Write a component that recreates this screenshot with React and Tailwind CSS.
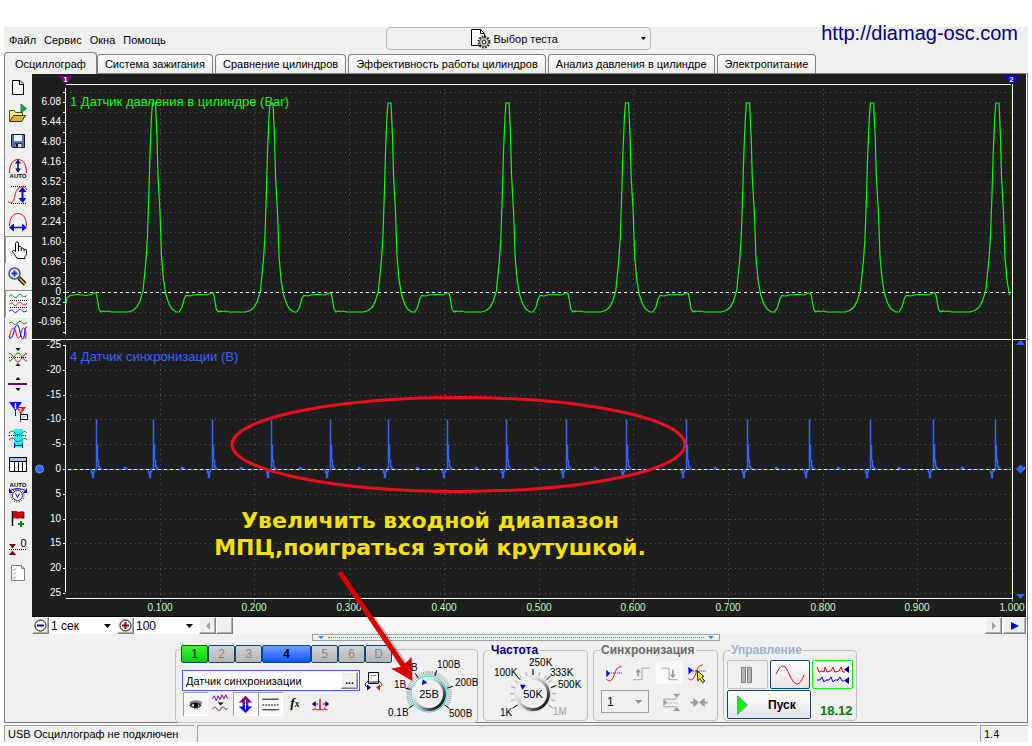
import clsx from 'clsx'

const TABS = [
  'Осциллограф',
  'Система зажигания',
  'Сравнение цилиндров',
  'Эффективность работы цилиндров',
  'Анализ давления в цилиндре',
  'Электропитание',
]

const PEAKS = [154, 271.5, 389.5, 507.5, 627, 748, 872, 997.5]
const SPIKES = [97, 154, 213, 272, 331, 389, 448, 507, 567, 627, 687, 748, 810, 871, 934, 996]

// offsets from the top of a pressure pulse: [dx, y]
const RISE = [
  [-60, 293], [-58, 293], [-57, 297], [-55, 309], [-53, 312], [-51, 311], [-49, 311.5], [-46, 311],
  [-42, 312], [-26, 312], [-21, 310.5], [-17, 307], [-14, 301], [-11, 291], [-8, 260], [-6.5, 236],
  [-5, 190], [-4, 153], [-2.5, 117], [-1.5, 103],
]
const FALL = [
  [1.5, 103], [3, 137], [4, 176], [6, 213], [7.5, 257], [9.5, 280], [12, 295], [15, 304], [18, 309],
  [22, 312], [25, 312], [28, 307], [30, 299], [32, 295.5], [36, 296], [39, 295], [45, 294.5],
  [53, 295],
]

const pressurePoints = () => {
  const points = [[66, 304], [67, 298], [70, 295.5], [78, 294.5], [86, 295.5], [92, 294.5]]
  PEAKS.forEach((peak, i) => {
    const before = i ? (peak - PEAKS[i - 1]) / 117 : 1
    const after = i < PEAKS.length - 1 ? (PEAKS[i + 1] - peak) / 117 : 1
    RISE.forEach(([dx, y]) => points.push([peak + dx * before, y]))
    FALL.forEach(([dx, y]) => points.push([peak + dx * after, y]))
  })
  return points.filter(([x]) => x < 1012).map((p) => p.join(',')).join(' ')
}

const syncPath = SPIKES.map(
  (x) =>
    `M${x - 5} 469v3h1v5h1v-6h1v-2h2V419v26h1v15h1v6h1v2h2M${x + 28} 469v-2h1v1h2`
).join('')

const TOP_LABELS = [
  ['6.08', 102], ['5.44', 122], ['4.80', 142], ['4.16', 162], ['3.52', 182], ['2.88', 202],
  ['2.24', 222], ['1.60', 242], ['0.96', 262], ['0.32', 282], ['0', 292], ['-0.32', 302],
  ['-0.96', 322],
]
const BOTTOM_LABELS = [-25, -20, -15, -10, -5, 0, 5, 10, 15, 20, 25]
const bottomY = (value) => Math.round(469 + value * 4.96)
const timeX = (step) => Math.round(65 + step * 94.7)
const TOP_ROWS = Array.from({ length: 25 }, (_, i) => 92 + i * 10)
const TIME_STEPS = Array.from({ length: 10 }, (_, i) => i + 1)

const Chart = () => (
  <svg
    viewBox="32 74 994 543"
    className="pointer-events-none relative z-10 block h-auto w-full overflow-visible font-['Liberation_Sans',sans-serif]">
    <rect x="32" y="74" width="994" height="543" fill="#1e1e1e" />
    <g stroke="#555" strokeWidth="1" strokeDasharray="1 4" shapeRendering="crispEdges">
      {TOP_ROWS.map((y) => (
        <path key={y} d={`M70 ${y + 0.5}H1011`} />
      ))}
      {BOTTOM_LABELS.map((v) => (
        <path key={v} d={`M70 ${bottomY(v) + 0.5}H1011`} />
      ))}
      {TIME_STEPS.slice(0, 9).map((s) => (
        <path key={s} d={`M${timeX(s) + 0.5} 89V338M${timeX(s) + 0.5} 344V597`} />
      ))}
    </g>
    <g stroke="#fff" fill="none" shapeRendering="crispEdges">
      <path d="M65.5 84V598M65 84.5H1012M1012.5 84V599M32 339.5H1026M65 598.5H1013" />
      {TOP_ROWS.map((y) => (
        <path key={y} d={`M63 ${y + 0.5}h3`} />
      ))}
      {BOTTOM_LABELS.map((v) => (
        <path key={v} d={`M63 ${bottomY(v) + 0.5}h3`} />
      ))}
    </g>
    <path d="M65.5 78V88M65.5 334V345M65.5 592V600" stroke="#800080" />
    <path d="M1011.5 84V598" stroke="#00f" shapeRendering="crispEdges" />
    <path d="M58 76H73L65.500 84Z" fill="#800080" />
    <path d="M1004 76H1019L1011.500 84Z" fill="#00f" />
    <g fill="#fff" fontSize="8" fontWeight="bold" textAnchor="middle">
      <text x="65.500" y="82">1</text>
      <text x="1011.500" y="82">2</text>
    </g>
    <g fill="#fff" fontSize="10" textAnchor="end">
      {TOP_LABELS.map(([label, y]) => (
        <text key={label} x="61" y={y + 3}>{label}</text>
      ))}
      {BOTTOM_LABELS.map((v) => (
        <text key={v} x="61" y={bottomY(v) + 3}>{v}</text>
      ))}
    </g>
    <g fill="#c8ffc8" fontSize="10" textAnchor="middle">
      {TIME_STEPS.map((s) => (
        <text key={s} x={timeX(s)} y="611">{(s / 10).toFixed(3)}</text>
      ))}
    </g>
    <g stroke="#888" shapeRendering="crispEdges">
      {TIME_STEPS.map((s) => (
        <path key={s} d={`M${timeX(s) + 0.5} 599v3`} />
      ))}
    </g>
    <path d="M66 469.5H1011" stroke="#36f" shapeRendering="crispEdges" />
    <path d={syncPath} stroke="#36f" strokeWidth="1.500" fill="none" transform="translate(-.5 .5)" />
    <path
      d="M66 292.5H1011M68 469.5H1011"
      stroke="#fff"
      strokeDasharray="3 3"
      shapeRendering="crispEdges"
    />
    <polyline points={pressurePoints()} fill="none" stroke="#0f0" strokeWidth="1.200" />
    <text x="70" y="106" fontSize="13" fill="#0f0">1 Датчик давления в цилиндре (Bar)</text>
    <text x="70" y="361" fontSize="13" fill="#36f">4 Датчик синхронизации (B)</text>
    <g fill="#36f">
      <circle cx="39.500" cy="469" r="4" stroke="#9bb6ff" strokeWidth=".6" />
      <path d="M1020.500 340l4.500 5h-9zM1016 594h9l-4.500 5zM1020.500 464.500l4.500 4.500-4.500 4.500-4.500-4.500z" />
    </g>
    <path d="M32 616.500H1026" stroke="#000" />

    <ellipse cx="458.500" cy="444.500" rx="226.500" ry="47" fill="none" stroke="#f20d1a" strokeWidth="3" />
    <g
      fill="#f5e100"
      fontSize="22"
      fontWeight="bold"
      textAnchor="middle"
      className="font-['DejaVu_Sans',sans-serif]">
      <text x="430" y="528">Увеличить входной диапазон</text>
      <text x="430" y="555">МПЦ,поиграться этой крутушкой.</text>
    </g>
    <g fill="none" stroke="#000" strokeOpacity=".25" strokeWidth="5" strokeLinecap="round">
      <path d="M344 576L410 672" />
    </g>
    <path d="M341 574L404 667" stroke="#d80000" strokeWidth="5" strokeLinecap="round" />
    <path d="M412.500 681L391 668.500 400.500 667 409 660 411.500 656.500Z" fill="#d80000" />
  </svg>
)

const ToolIcon = ({ children, className }) => (
  <svg viewBox="0 0 27 27" className={clsx('size-[27px]', className)} fill="none">
    {children}
  </svg>
)

const TOOLS = [
  {
    label: 'Новый',
    icon: <path d="M7.500 6.500H15l3.500 3.500v10.500h-11zM14.500 6.500v4h4" fill="#fff" stroke="#000" />,
  },
  {
    label: 'Открыть',
    icon: (
      <>
        <path d="M4.500 20.500v-11h5l1 2h7v3" fill="#ffe98a" stroke="#5b4a00" />
        <path d="M4.500 20.500l4-6h12l-4 6z" fill="#d9b13b" stroke="#3d3200" />
        <path d="M16 3l5.500 4.500L16 12z" fill="#00b050" stroke="#063" strokeWidth=".7" />
      </>
    ),
  },
  {
    label: 'Сохранить',
    icon: (
      <>
        <path d="M6.500 6.500h13v13h-12l-1-1z" fill="#5a74b8" stroke="#101840" />
        <path d="M9 7h8v6H9z" fill="#e8f0ff" />
        <path d="M10 15.500h7v4h-7z" fill="#ddd" stroke="#101840" strokeWidth=".8" />
        <path d="M11 16h2v3h-2z" fill="#101840" />
      </>
    ),
  },
  {
    label: 'Авто',
    icon: (
      <>
        <path d="M4.500 18C4.500 9 8 4.500 13 4.500S21.500 9 21.500 18" stroke="#f00" />
        <path d="M13 5.500v11" stroke="#00008b" strokeWidth="1.500" />
        <path d="M13 4.500l3 4h-6zM13 17.500l3-4h-6z" fill="#00008b" />
        <text x="13" y="22.500" fontSize="6" fontWeight="bold" textAnchor="middle" fill="#000">AUTO</text>
      </>
    ),
  },
  {
    label: 'По вертикали',
    icon: (
      <>
        <path d="M6 4.500h16M6 21.500h16" stroke="#000" strokeDasharray="1 1" />
        <path d="M3 19.500c2 2 5 1.500 6-2C10.500 12 11 6 16 5c3-.6 4 0 6 3" stroke="#f00" />
        <path d="M17.500 7v12" stroke="#00f" strokeWidth="2" />
        <path d="M17.500 5l4 5h-8zM17.500 21l4-5h-8z" fill="#00f" />
      </>
    ),
  },
  {
    label: 'По горизонтали',
    icon: (
      <>
        <path d="M4.500 17C4.500 9 8 4.500 13 4.500S21.500 9 21.500 17" stroke="#f00" />
        <path d="M7 18.500h12" stroke="#00f" strokeWidth="1.500" />
        <path d="M4 18.500l5-4v8zM22 18.500l-5-4v8z" fill="#00f" />
      </>
    ),
  },
  {
    label: 'Рука',
    active: true,
    icon: (
      <path
        d="M10.500 15V7.500c0-2 3-2 3 0V13v-1.500c.5-1.500 2.500-1.200 2.800 0V13c.3-1.200 2.500-1.200 2.700 0v1c.5-1.200 2.500-1 2.500.5v4l-1.500 2v2h-8c-1-2-2.500-4.500-4-6-1.500-1.700.5-3 2.500-1zM13.500 12v3M16.300 13v2M19 13.500v2"
        fill="#fff"
        stroke="#000"
      />
    ),
  },
  {
    label: 'Масштаб',
    icon: (
      <>
        <path d="M14 15l6 6" stroke="#000" strokeWidth="4" />
        <path d="M14.500 15.500l5.500 5.500" stroke="#e0a030" strokeWidth="2" />
        <circle cx="9.500" cy="10.500" r="5.500" fill="#dce9ff" stroke="#44577f" strokeWidth="1.500" />
        <path d="M6.500 10.500h6M9.500 7.500v6" stroke="#123ea0" strokeWidth="2" />
      </>
    ),
  },
  {
    label: 'Раздельно',
    active: true,
    icon: (
      <>
        <path d="M4 6.500c2-2 3-2 4.500 0s3 1 4.500-1 3-1 4.500.500 3 .5 4.500-.5" stroke="#080" />
        <path d="M5 10.500h18M5 17.500h18" stroke="#000" strokeDasharray="1 1" />
        <path d="M4 14.500c2-2 3-2 4.500 0s3 1 4.500-1 3-1 4.500.500 3 .5 4.500-.5" stroke="#f00" />
        <path d="M4 21.500c2-2 3-2 4.500 0s3 1 4.500-1 3-1 4.500.500 3 .5 4.500-.5" stroke="#00f" />
      </>
    ),
  },
  {
    label: 'Вместе',
    icon: (
      <>
        <path d="M4 6.500c2-2 3-2 4.500 0s3 1 4.500-1 3-1 4.500.500 3 .5 4.500-.5" stroke="#080" />
        <path d="M5 22c-1-3 1-11 3.500-11s2.500 10 5 10 2.500-10 5-10 3 7 2 11" stroke="#f00" />
        <path d="M4 19c1 3 3 3 4.500-3S11 8 12.500 8s2 6 3.500 11 3 3 3.500-2 .5-7 2.500-7" stroke="#00f" />
      </>
    ),
  },
  {
    label: 'Симметрия',
    icon: (
      <>
        <path d="M10.500 4h5L13 7zM10.500 22h5L13 19z" fill="#000" />
        <path d="M4 13.500h18" stroke="#000" strokeDasharray="1 1" />
        <path d="M4 9.500c4 0 6 8.500 9 8.500s5-8.500 9-8.500" stroke="#f00" />
        <path d="M4 17c4 0 6-8 9-8s5 8 9 8" stroke="#080" />
      </>
    ),
  },
  {
    label: 'Линия',
    icon: (
      <>
        <path d="M10.500 9h5L13 6zM10.500 17h5L13 20z" fill="#000" />
        <path d="M3 13h19" stroke="#800080" strokeWidth="2" />
      </>
    ),
  },
  {
    label: 'Маркеры',
    icon: (
      <>
        <path d="M11 9h10l-5 7z" fill="#f00" />
        <path d="M13.500 10.500h3l-2 2.500h3" stroke="#fff" strokeWidth=".8" />
        <path d="M15.500 14v10" stroke="#f00" />
        <path d="M4 4h13l-6.500 9z" fill="#00f" />
        <path d="M10.500 12v6" stroke="#00f" />
        <path d="M10.500 5v6" stroke="#fff" strokeWidth="1.500" />
        <path d="M15.500 16.500h7v5h-7z" fill="#fff" stroke="#00006b" />
        <path d="M17 19.500l1-1 1 1 2-2" stroke="#666" strokeWidth=".7" />
      </>
    ),
  },
  {
    label: 'Область',
    icon: (
      <>
        <path d="M9 4h9v18H9z" fill="#0ff" />
        <path d="M4 8c3-3 4-2 6 0s5 2 7 0 3-2 5 0" stroke="#080" />
        <path d="M4 10.500h18" stroke="#000" strokeDasharray="1 1" />
        <path d="M4 15c3-3 4-2 6 0s5 2 7 0 3-2 5 0" stroke="#f00" />
        <path d="M9.500 18v5M17.500 18v5M10 20.500h7" stroke="#00008b" />
      </>
    ),
  },
  {
    label: 'Таблица',
    icon: (
      <>
        <path d="M4.500 5.500h17v14h-17z" fill="#fff" stroke="#000" />
        <path d="M5 6h16v3H5z" fill="#9cc8f0" />
        <path d="M5 9.500h16M9.500 9v10M13.500 9v10M17.500 9v10" stroke="#000" />
      </>
    ),
  },
  {
    label: 'Авто напряжение',
    icon: (
      <>
        <text x="13" y="8" fontSize="6" fontWeight="bold" textAnchor="middle" fill="#000">AUTO</text>
        <path d="M5 12c3-3 13-3 16 0" stroke="#00f" />
        <path d="M4 9v5h4zM22 9v5h-4z" fill="#00f" />
        <circle cx="12.500" cy="16.500" r="6.500" stroke="#000" strokeDasharray="1 1.500" />
        <circle cx="12.500" cy="16.500" r="5" fill="#fff" stroke="#333" />
        <path d="M10.500 14.500l2 4 2-4" stroke="#00f" />
      </>
    ),
  },
  {
    label: 'Добавить метку',
    icon: (
      <>
        <path d="M7.500 5v15" stroke="#000" strokeWidth="1.500" />
        <path d="M8 6c3-2 5 1 7 0 2-.8 3 0 4 0v6c-2 1-3-1-5 0s-4-1-6 0z" fill="#e00000" stroke="#400" strokeWidth=".7" />
        <path d="M13 18h6M16 15v6" stroke="#080" strokeWidth="2" />
      </>
    ),
  },
  {
    label: 'Ноль',
    icon: (
      <>
        <path d="M4 16.500h18" stroke="#000" strokeDasharray="1 1" />
        <path d="M4 11h7l-3.500 4.500zM4 22h7l-3.500-4.500z" fill="#800000" />
        <text x="18.500" y="14" fontSize="11" textAnchor="middle" fill="#000">0</text>
      </>
    ),
  },
  {
    label: 'Отчёт',
    icon: (
      <>
        <path d="M6.500 5.500h10l3 3v12h-13zM16.500 5.500v3h3" fill="#fff" stroke="#808080" />
        <path d="M8 9.500l1 1 2-2M8 13.500l1 1 2-2M8 17.500l1 1 2-2" stroke="#808080" />
      </>
    ),
  },
]

const SideBar = () => (
  <nav className="flex w-[27px] shrink-0 flex-col">
    {TOOLS.map(({ label, icon, active }) => (
      <button
        key={label}
        aria-label={label}
        className={clsx(
          'h-[27px]',
          active && 'bg-[#f8f8f8] shadow-[inset_1px_1px_0_#909090,inset_-1px_-1px_0_#fff]'
        )}>
        <ToolIcon>{icon}</ToolIcon>
      </button>
    ))}
  </nav>
)

const Header = () => (
  <header className="relative grid h-[25px] grid-cols-[1fr_265px_1fr] items-center pl-[5px]">
    <nav className="flex gap-2">
      {['Файл', 'Сервис', 'Окна', 'Помощь'].map((item) => (
        <button key={item}>{item}</button>
      ))}
    </nav>
    <button className="flex h-[23px] items-center justify-center gap-[2px] self-start rounded-sm border border-[#b8b8b8] px-1">
      <span className="flex-[9]" />
      <svg viewBox="0 0 21 21" className="size-[21px]" fill="none">
        <path d="M1.500 1.500h9l4 4v12h-13zM10.500 1.500v4h4" fill="#fff" stroke="#000" />
        <circle cx="14" cy="14" r="5.500" stroke="#222" strokeWidth="2" strokeDasharray="1.600 1.280" />
        <circle cx="14" cy="14" r="4.500" fill="#b9c9b4" stroke="#222" strokeWidth=".7" />
        <circle cx="14" cy="14" r="1.800" fill="#fff" stroke="#222" />
      </svg>
      Выбор теста
      <span className="flex flex-[10] justify-end">
        <svg viewBox="0 0 5 3" className="h-[3px] w-[5px]">
          <path d="M0 0h5L2.500 3z" />
        </svg>
      </span>
    </button>
    <a
      href="http://diamag-osc.com"
      className="absolute -top-[6px] right-[10px] text-xl/6 text-[#000080]">
      http://diamag-osc.com
    </a>
  </header>
)

const TabBar = () => (
  <div role="tablist" className="flex items-end gap-[2px] border-b border-[#808080]">
    {TABS.map((tab, i) => (
      <button
        key={tab}
        role="tab"
        aria-selected={i === 0}
        className={clsx(
          'whitespace-nowrap rounded-t-sm border border-b-0 border-[#808080]',
          i === 0
            ? '-mr-[2px] -mb-px h-[22px] bg-[#f0f0f0] px-[10px]'
            : 'h-[19px] bg-linear-to-b from-white to-[#ececec] px-[7px]'
        )}>
        {tab}
      </button>
    ))}
  </div>
)

const RAISED = 'border border-[#808080] border-t-white border-l-white bg-[#f0f0f0] shadow-[inset_-1px_-1px_0_#b0b0b0]'

const Combo = ({ label, value, className }) => (
  <span className={clsx('relative flex items-center', className)}>
    <select aria-label={label} className="h-full w-full appearance-none bg-transparent pl-[2px]">
      <option>{value}</option>
    </select>
    <svg viewBox="0 0 7 4" className="pointer-events-none absolute right-[6px] h-1 w-[7px] fill-current">
      <path d="M0 0h7L3.500 4z" />
    </svg>
  </span>
)

const RoundButton = ({ label, color, plus }) => (
  <button aria-label={label} className={clsx('flex w-[17px] items-center justify-center', RAISED)}>
    <svg viewBox="0 0 13 13" className="size-[13px]" fill="none">
      <circle cx="6.500" cy="6.500" r="5.500" fill="#fff" stroke="#000" />
      <path d={plus ? 'M3 6.500h7M6.500 3v7' : 'M3 6.500h7'} stroke={color} strokeWidth="2" />
    </svg>
  </button>
)

const ScrollRow = () => (
  <div className="flex h-[17px] bg-[repeating-conic-gradient(#fff_0_25%,#efefef_0_50%)] bg-size-[2px_2px]">
    <RoundButton label="Уменьшить" color="#000080" />
    <Combo label="Развёртка" value="1 сек" className="w-[68px] bg-white text-xs" />
    <RoundButton label="Увеличить" color="#800000" plus />
    <Combo label="Масштаб" value="100" className="w-[65px] bg-white text-xs" />
    <button aria-label="Назад" className={clsx('flex w-[17px] items-center justify-center', RAISED)}>
      <svg viewBox="0 0 4 8" className="h-2 w-1 fill-[#a0a0a0]">
        <path d="M4 0v8L0 4z" />
      </svg>
    </button>
    <div className={clsx('w-[17px]', RAISED)} />
    <div className="flex-1" />
    <button aria-label="Вперёд" className={clsx('flex w-[17px] items-center justify-center', RAISED)}>
      <svg viewBox="0 0 4 8" className="h-2 w-1 fill-[#a0a0a0]">
        <path d="M0 0v8l4-4z" />
      </svg>
    </button>
    <button
      aria-label="Воспроизвести"
      className={clsx('ml-px flex w-[23px] items-center justify-center', RAISED)}>
      <svg viewBox="0 0 8 8" className="size-2 fill-[#00f]">
        <path d="M0 0v8l8-4z" />
      </svg>
    </button>
  </div>
)

const Splitter = () => (
  <div className="mx-auto flex h-[7px] w-[408px] items-center gap-1 border border-[#a0a0a0] px-[5px]">
    <svg viewBox="0 0 6 3" className="h-[3px] w-[6px] fill-[#1e90ff]">
      <path d="M0 0h6L3 3z" />
    </svg>
    <div className="flex-1 border-t border-dotted border-[#1e90ff]" />
    <svg viewBox="0 0 6 3" className="h-[3px] w-[6px] fill-[#1e90ff]">
      <path d="M0 0h6L3 3z" />
    </svg>
  </div>
)

const polar = (cx, cy, r, deg) => {
  const a = (deg * Math.PI) / 180
  return `${(cx + r * Math.cos(a)).toFixed(2)} ${(cy + r * Math.sin(a)).toFixed(2)}`
}

/**
 * Rotary knob with its scale
 * @param {Number} minor - count of the small grey ticks
 * @param {Array} marks - [text, x, y, tick angle, greyed]
 * @param {Number} pointer - angle of the blue pointer
 */
const Knob = ({ id, value, minor, marks, pointer, ring, cx, cy, className }) => (
  <svg viewBox="0 0 95 72" className={clsx('h-[72px] w-[95px] shrink-0', className)} fill="none">
    <defs>
      <linearGradient id={id} x1="0.100" y1="0.200" x2="0.850" y2="0.850">
        <stop offset="0" stopColor="#fff" />
        <stop offset=".5" stopColor="#bbb" />
        <stop offset="1" stopColor="#111" />
      </linearGradient>
    </defs>
    {Array.from({ length: minor }, (_, i) => {
      const deg = 145 + (i * 250) / (minor - 1)
      return <path key={i} d={`M${polar(cx, cy, 19, deg)}L${polar(cx, cy, 23, deg)}`} stroke="#a0a0a0" />
    })}
    {marks.map(([text, x, y, deg, grey]) => (
      <g key={text}>
        <path d={`M${polar(cx, cy, 19, deg)}L${polar(cx, cy, 25, deg)}`} stroke={grey ? '#a0a0a0' : '#000'} />
        <text x={x} y={y} fontSize="10" fill={grey ? '#a0a0a0' : '#000'}>{text}</text>
      </g>
    ))}
    <circle cx={cx} cy={cy} r="17" fill={`url(#${id})`} />
    <circle cx={cx} cy={cy} r="14" fill="#f0f0f0" />
    <circle cx={cx} cy={cy} r="18" stroke={ring} />
    <path
      d="M-2 -3L3 0L-2 3Z"
      fill="#00f"
      transform={`translate(${polar(cx, cy, 13, pointer)}) rotate(${pointer})`}
    />
    <text x={cx} y={cy + 4} fontSize="11" fill="#000" textAnchor="middle">{value}</text>
  </svg>
)

const RANGE_MARKS = [
  ['0.1В', 4, 66, 145],
  ['1В', 10, 38, 194],
  ['10В', 16, 21, 236],
  ['100В', 53, 18, 288],
  ['200В', 71, 36, 342],
  ['500В', 65, 67, 35],
]
const RATE_MARKS = [
  ['1K', 16, 66, 145],
  ['100K', 10, 26, 228],
  ['250K', 45, 16, 270],
  ['333K', 66, 26, 314],
  ['500K', 74, 38, 340],
  ['1M', 69, 65, 35, true],
]

const CHANNELS = ['1', '2', '3', '4', '5', '6', 'D']
const channelStyle = {
  1: 'w-[27px] bg-linear-to-b from-[#38f838] to-[#00d000]',
  4: 'w-[49px] bg-linear-to-b from-[#6a9cff] to-[#1050ff] font-bold',
}

const CHANNEL_TOOLS = [
  {
    label: 'Видимость',
    active: true,
    icon: (
      <>
        <path d="M6 11c3-3 9-3 13-1v3H7z" fill="#8a8a80" />
        <path d="M7 14c2-3 8-3 11 0-2 3-8 3-11 0z" fill="#fff" stroke="#222" strokeWidth="1.500" />
        <circle cx="13" cy="14" r="2.200" fill="#000" />
        <path d="M11 17.500h4" stroke="#c66" />
      </>
    ),
  },
  {
    label: 'Фильтр',
    icon: (
      <>
        <path d="M4 7l2-3 2 5 2-5 2 4 2-5 2 4 2-4 2 4" stroke="#800080" />
        <path d="M9.500 11h6L12.500 14z" fill="#000" />
        <path d="M4 18c2-3 3-3 5 0s3 1 4-1 3-2 4 0 2 1 3 0" stroke="#800080" />
      </>
    ),
  },
  {
    label: 'Сдвиг',
    active: true,
    icon: (
      <>
        <path d="M12.500 4l7 7h-4v2h-6v-2h-4z" fill="#800080" />
        <path d="M12.500 22l7-7h-4v-2h-6v2h-4z" fill="#00f" />
        <path d="M12.500 8v10" stroke="#fff" />
      </>
    ),
  },
  {
    label: 'Пределы',
    active: true,
    icon: (
      <>
        <path d="M4 7.500h17M4 18.500h17" stroke="#000" />
        <path d="M4 13.500h17" stroke="#000" strokeDasharray="2 1" />
      </>
    ),
  },
  {
    label: 'Функция',
    icon: (
      <text x="7" y="16" fontSize="14" fontWeight="bold" fontStyle="italic" fill="#000" className="font-['Liberation_Serif',serif]">
        f<tspan fontSize="10">x</tspan>
      </text>
    ),
  },
  {
    label: 'Импульс',
    icon: (
      <>
        <path d="M4 18.500h2l1-2 1 2h4V7v11.500h4l1-2 1 2h2" stroke="#f00" />
        <path d="M5 12.500h5M15 12.500h5" stroke="#00008b" />
        <path d="M3.500 12.500l4-3v6zM21.500 12.500l-4-3v6z" fill="#00008b" />
      </>
    ),
  },
]

const ChannelGroup = () => (
  <section className="mt-2 flex w-[303px] rounded-sm border border-[#c0c0c0]">
    <div className="w-[208px] pl-[5px]">
      <div className="-mt-[5px] flex">
        {CHANNELS.map((channel) => (
          <button
            key={channel}
            className={clsx(
              'h-[18px] shrink-0 rounded-xs border border-[#0a4a7a] text-xs/4',
              channelStyle[channel] || 'w-[27px] bg-linear-to-b from-[#d4d4d4] to-[#b4b4b4] text-[#888]'
            )}>
            {channel}
          </button>
        ))}
      </div>
      <div className="mt-[7px] flex items-center gap-1 pl-px">
        <div className="flex h-[21px] w-[178px] border border-[#36f] bg-white p-px">
          <input
            aria-label="Датчик"
            defaultValue="Датчик синхронизации"
            className="min-w-0 flex-1 pl-[2px] outline-none"
          />
          <button className={clsx('w-[17px] text-[10px]/3 font-bold', RAISED)}>...</button>
        </div>
        <button aria-label="Поменять" className="flex">
          <svg viewBox="0 0 19 20" className="h-5 w-[19px] shrink-0" fill="none">
            <path d="M4.500 1.500h10v11h-10z" fill="#fff" stroke="#000" />
            <path d="M5 10h9v2H5z" fill="#888" />
            <path d="M7 5l1-1 1 1 2-1 1 1M7 7h1" stroke="#333" strokeWidth=".7" />
            <path d="M4 10.500C1 11 0 15 4 16.500" stroke="#00008b" />
            <path d="M3 13.500l4 3-4 3z" fill="#00008b" />
            <path d="M15 10.500c3 .5 4 4.500 0 6" stroke="#f00" />
            <path d="M16 13.500l-4 3 4 3z" fill="#f00" />
          </svg>
        </button>
      </div>
      <div className="flex pt-px pl-[2px]">
        {CHANNEL_TOOLS.map(({ label, icon, active }) => (
          <button
            key={label}
            aria-label={label}
            className={clsx(
              'h-[24px] w-[25px]',
              active && 'bg-[#f8f8f8] shadow-[inset_1px_1px_0_#a0a0a0,inset_-1px_-1px_0_#fff]'
            )}>
            <svg viewBox="0 0 25 25" className="h-[24px] w-[25px]" fill="none">
              {icon}
            </svg>
          </button>
        ))}
      </div>
    </div>
    <Knob
      id="range"
      value="25В"
      minor={44}
      marks={RANGE_MARKS}
      pointer={247}
      ring="#00e5f5"
      cx={45}
      cy={44}
    />
  </section>
)

const Group = ({ title, titleClass, className, children }) => (
  <fieldset className={clsx('mt-[3px] h-[77px] rounded-sm border border-[#c0c0c0]', className)}>
    <legend className={clsx('ml-[6px] px-px text-xs/3 font-bold', titleClass)}>{title}</legend>
    {children}
  </fieldset>
)

const SyncIcon = ({ label, children, className }) => (
  <button aria-label={label} className={clsx('flex h-[23px] justify-center', className)}>
    <svg viewBox="0 0 24 24" className="h-[23px] w-6" fill="none">
      {children}
    </svg>
  </button>
)

const SyncGroup = () => (
  <Group title="Синхронизация" titleClass="text-[#696969]" className="w-[125px]">
    <div className="grid grid-cols-4 px-[6px] pt-[5px]">
      <SyncIcon label="Уровень">
        <path d="M4 9v8l4-4z" fill="#00f" />
        <path d="M7 12.500h14" stroke="#00f" strokeDasharray="1 1" />
        <path d="M4 19c3 3 6 2 8-4s3-9 8-9" stroke="#f00" />
      </SyncIcon>
      <SyncIcon label="Фронт">
        <path d="M3 19.500h9v-12h8" stroke="#a0a0a0" />
        <path d="M8 9v7" stroke="#a0a0a0" strokeWidth="2" />
        <path d="M5 12l3-4 3 4z" fill="#a0a0a0" />
      </SyncIcon>
      <SyncIcon label="Спад" className="bg-[#f9f9f9]">
        <path d="M4 7.500h8v12h9" stroke="#a0a0a0" />
        <path d="M16 9v6" stroke="#a0a0a0" strokeWidth="2" />
        <path d="M13 14l3 4 3-4z" fill="#a0a0a0" />
      </SyncIcon>
      <SyncIcon label="Выбор">
        <path d="M3 6v8l5-4z" fill="#00f" />
        <path d="M8 10.500h13" stroke="#00f" strokeDasharray="1 1" />
        <path d="M3 18c3 3 5 2 7-3s2-10 8-11" stroke="#f00" />
        <path d="M12 10l7 6-2 1 3 4-2 1.500-3-4-2 2z" fill="#ff0" stroke="#000" />
      </SyncIcon>
    </div>
    <div className="flex items-center pt-[6px] pl-[7px]">
      <Combo
        label="Канал"
        value="1"
        className="mr-[10px] h-[23px] w-[48px] border border-[#a0a0a0] pl-[3px] text-xs [&>svg]:fill-[#909090]"
      />
      <SyncIcon label="Порог">
        <path d="M4 9.500h14M4 17.500h14" stroke="#a0a0a0" />
        <path d="M8 13.500h12" stroke="#a0a0a0" strokeDasharray="1 1" />
        <path d="M4 9v8l4-4zM14 4h8l-4 4zM14 22h8l-4-4z" fill="#a0a0a0" />
      </SyncIcon>
      <SyncIcon label="Сжать" className="ml-1">
        <path d="M3 13h6M15 13h6" stroke="#a0a0a0" strokeWidth="2" />
        <path d="M6 8l6 5-6 5zM18 8l-6 5 6 5z" fill="#a0a0a0" />
      </SyncIcon>
    </div>
  </Group>
)

const PANEL_BUTTON = 'flex h-[29px] items-center rounded-xs border bg-linear-to-b from-white to-[#e4e4ea]'

const ControlGroup = () => (
  <Group title="Управление" titleClass="text-[#9ab4d4]" className="w-[134px]">
    <div className="grid grid-cols-3 gap-[2px] px-[3px] pt-1">
      <button aria-label="Пауза" className="flex h-[29px] items-center justify-center rounded-xs border border-[#c0c0c0]">
        <svg viewBox="0 0 12 16" className="h-4 w-3" fill="#b4b4b4" stroke="#808080">
          <path d="M.5.5h4v15h-4zM6.500.5h4v15h-4z" />
        </svg>
      </button>
      <button aria-label="Один канал" className={clsx(PANEL_BUTTON, 'justify-center border-[#0a4a7a]')}>
        <svg viewBox="0 0 30 20" className="h-5 w-[30px]" fill="none" stroke="#f00">
          <path d="M1 9C4 3 6 1 8 1c5 0 8 18 14 18 3 0 5-4 7-9" />
        </svg>
      </button>
      <button aria-label="Все каналы" className={clsx(PANEL_BUTTON, 'justify-center border-[#0f0]')}>
        <svg viewBox="0 0 34 20" className="h-5 w-[34px]" fill="none">
          <path d="M1 2l2 5 3-1 2 1 1-5 2 5 4-1 2-4 2 5 4-1 2-4 2 5h2" stroke="#f00" />
          <path d="M1 15h3l2-3 2 5 2-2h3l2-3 2 5 2-2h3l2-3 2 4h2" stroke="#00f" />
          <path d="M33 1v7l-5-3.500zM33 12v7l-5-3.500z" fill="#00008b" />
        </svg>
      </button>
    </div>
    <div className="flex items-end gap-[9px] px-[3px] pt-px">
      <button className={clsx(PANEL_BUTTON, 'w-[84px] gap-5 border-[#0a4a7a] pl-[9px] text-xs font-bold')}>
        <svg viewBox="0 0 11 20" className="h-5 w-[11px]">
          <path d="M.5.500v19l10-9.500z" fill="#0f0" stroke="#888" />
        </svg>
        Пуск
      </button>
      <output className="text-[13px]/4 font-bold text-[#008000]">18.12</output>
    </div>
  </Group>
)

const StatusBar = () => (
  <footer className="mt-[2px] flex h-[17px] gap-[3px] *:border-t *:border-l *:border-[#a0a0a0] *:pl-[3px]">
    <div className="w-[190px]">USB Осциллограф не подключен</div>
    <div className="flex-1" />
    <div className="w-[48px]">1.4</div>
  </footer>
)

const App = () => (
  <div className="bg-white px-1 pt-[27px] pb-[5px]">
    <div className="bg-[#f0f0f0] font-['Liberation_Sans',sans-serif] text-[11px]/4 text-black">
      <Header />
      <TabBar />
      <main className="border-r border-b border-l border-[#808080]">
        <div className="flex border-r border-white">
          <SideBar />
          <div className="min-w-0 flex-1">
            <Chart />
            <ScrollRow />
          </div>
        </div>
        <Splitter />
        <div className="flex h-[81px] items-start justify-center gap-[5px]">
          <ChannelGroup />
          <Group title="Частота" titleClass="text-[#000080]" className="w-[105px]">
            <Knob
              id="rate"
              value="50K"
              minor={15}
              marks={RATE_MARKS}
              pointer={216}
              ring="#ddd"
              cx={49}
              cy={44}
              className="-mt-[6px] overflow-visible"
            />
          </Group>
          <SyncGroup />
          <ControlGroup />
        </div>
      </main>
      <StatusBar />
    </div>
  </div>
)

export default App
